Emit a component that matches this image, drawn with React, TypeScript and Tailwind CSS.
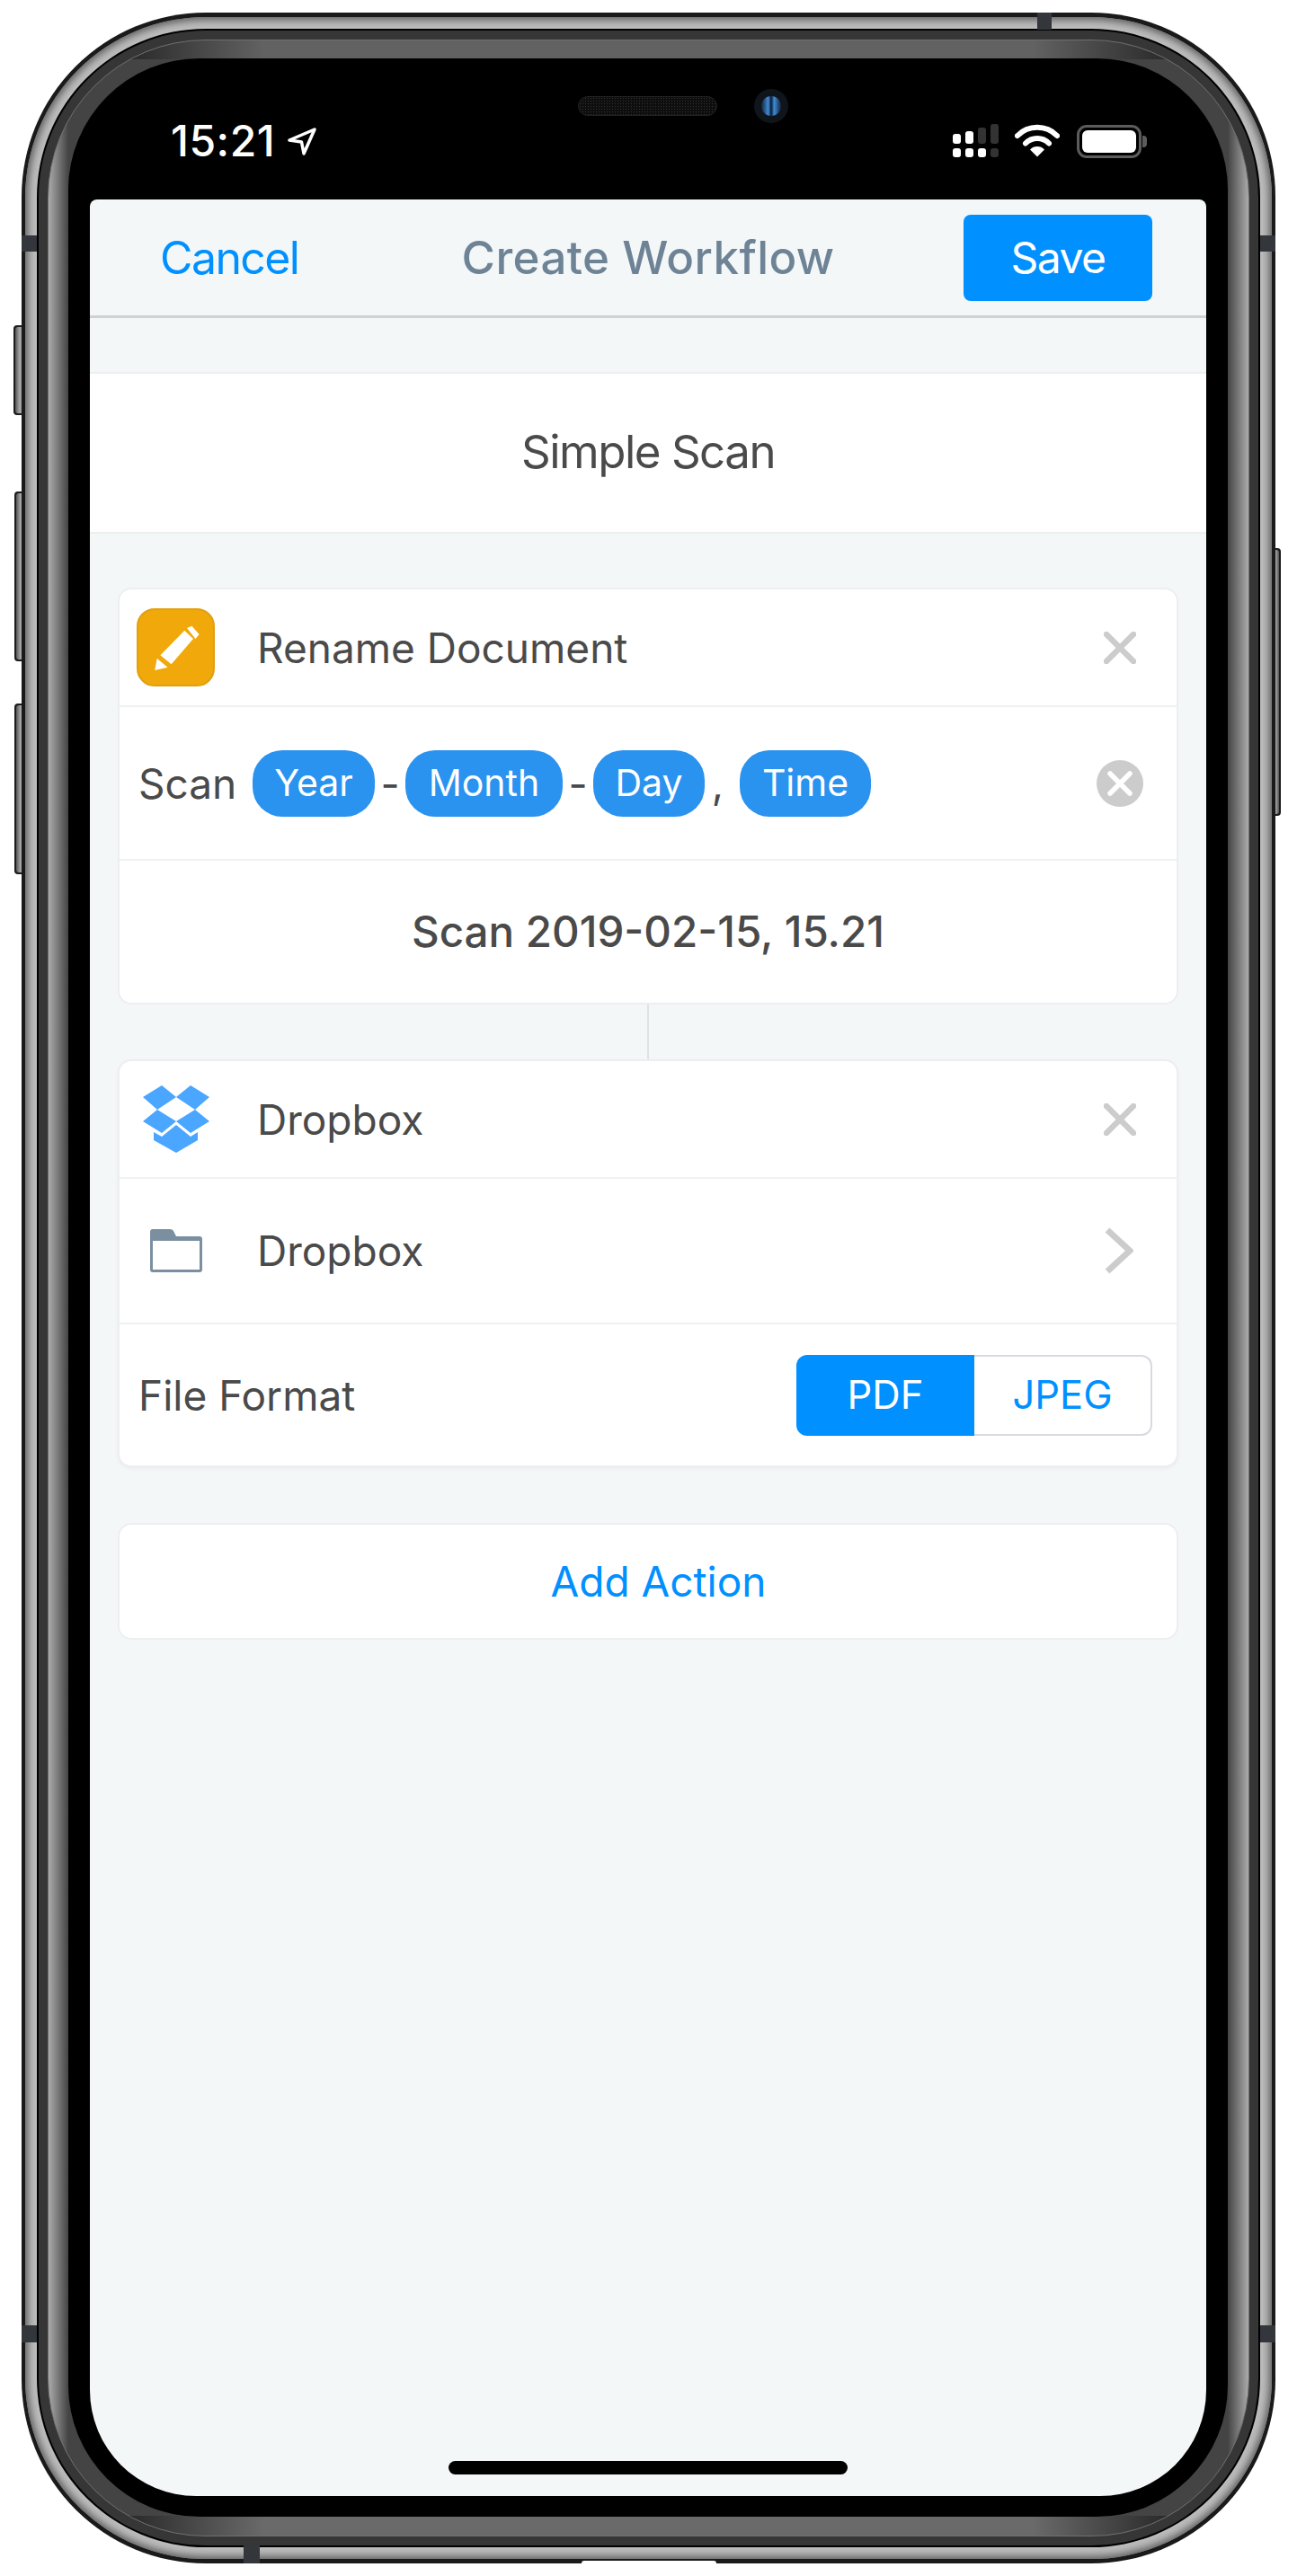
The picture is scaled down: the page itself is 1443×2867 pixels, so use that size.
import React from "react";

const font = "[font-family:Inter,'Liberation_Sans',sans-serif]";

function XIcon({ h = 36 }: { h?: number }) {
  return (
    <svg width="36" height={h} viewBox={`0 0 36 ${h}`} className="block" aria-hidden>
      <path d={`M3 3 L33 ${h - 3} M33 3 L3 ${h - 3}`} stroke="#cccccc" strokeWidth="6.5" strokeLinecap="round" fill="none" />
    </svg>
  );
}

function Pill({ w, children }: { w: string; children: React.ReactNode }) {
  return <div className={`${w} h-[74px] rounded-[33px] bg-[#2a92ef] text-white text-[41px] flex items-center justify-center`}>{children}</div>;
}

function Row({ h, children, last }: { h: string; children: React.ReactNode; last?: boolean }) {
  return <div className={`${h} flex items-center ${last ? "" : "border-b-2 border-[#f0f1f2]"}`}>{children}</div>;
}

export default function App() {
  return (
    <div className={`relative w-[1443px] h-[2867px] bg-white overflow-hidden ${font}`}>
      {/* side buttons */}
      <div className="absolute left-[15px] top-[362px] w-[12px] h-[100px] rounded-l-[4px] bg-[#1c1c1c] p-[2px] pr-0"><div className="w-full h-full rounded-l-[3px] bg-[linear-gradient(90deg,#555,#aaa_50%,#777)]" /></div>
      <div className="absolute left-[16px] top-[547px] w-[12px] h-[189px] rounded-l-[4px] bg-[#1c1c1c] p-[2px] pr-0"><div className="w-full h-full rounded-l-[3px] bg-[linear-gradient(90deg,#555,#aaa_50%,#777)]" /></div>
      <div className="absolute left-[16px] top-[783px] w-[12px] h-[190px] rounded-l-[4px] bg-[#1c1c1c] p-[2px] pr-0"><div className="w-full h-full rounded-l-[3px] bg-[linear-gradient(90deg,#555,#aaa_50%,#777)]" /></div>
      <div className="absolute left-[1415px] top-[610px] w-[10px] h-[298px] rounded-r-[4px] bg-[#1c1c1c] p-[2px] pl-0"><div className="w-full h-full rounded-r-[3px] bg-[linear-gradient(270deg,#555,#aaa_50%,#777)]" /></div>

      {/* device frame: nested bands */}
      <div className="pt-[14px] pl-[24px]">
        <div className="relative w-[1395px] h-[2839px] rounded-[205px] bg-[#1a1a1a] p-[5px] pl-[4px] pr-[4px]">
          <div className="w-full h-full rounded-[201px] bg-[#bcbcbc] shadow-[inset_0_0_9px_3px_#5c5c5c] p-[13px]">
            <div className="w-full h-full rounded-[188px] bg-black p-[2px]">
              <div className="w-full h-full rounded-[186px] bg-[#363636] pt-[10px] pb-[10px] px-[10px]">
                <div className="w-full h-full rounded-[176px] border border-[#707070] [background:linear-gradient(to_right,#2a2a2a_90px,#626262_240px,#626262_calc(100%-240px),#2a2a2a_calc(100%-90px))_top/100%_21px_no-repeat,linear-gradient(to_right,#2a2a2a_90px,#6a6a6a_240px,#6a6a6a_calc(100%-240px),#2a2a2a_calc(100%-90px))_bottom/100%_22px_no-repeat,linear-gradient(to_right,#ababab_0,#444_22px,#444_calc(100%-23px),#ababab_100%)] pt-[20px] pb-[21px] pl-[22px] pr-[23px]">
                  <div className="relative w-full h-full rounded-[146px] bg-black pt-[157px] pb-[23px] px-[24px]">
                    {/* status bar */}
                    <div className="absolute left-[567px] top-[42px] w-[155px] h-[22px] rounded-[11px] bg-[#0e0e0e] bg-[radial-gradient(#333_1px,transparent_1px)] bg-[size:3px_3px] border border-[#222]" />
                    <div className="absolute left-[763px] top-[34px] w-[38px] h-[38px] rounded-full bg-[#10151c] flex items-center justify-center">
                      <div className="w-[22px] h-[22px] rounded-full bg-[linear-gradient(90deg,#12233a,#3f8bd6_35%,#0c1a2c_50%,#3f8bd6_65%,#12233a)]" />
                    </div>
                    <div className="absolute left-[114px] top-[67px] text-white text-[48px] leading-[50px] font-medium tracking-[0.5px] whitespace-nowrap">15:21</div>
                    <svg className="absolute left-[244px] top-[77px]" width="32" height="31" viewBox="0 0 32 31" aria-hidden>
                      <path d="M2 14 L30 2 L18 29 L15.5 16 Z" fill="none" stroke="#fff" strokeWidth="3.5" strokeLinejoin="round" />
                    </svg>
                    <svg className="absolute left-[984px] top-[73px]" width="52" height="38" viewBox="0 0 52 38" aria-hidden>
                      <rect x="0" y="11" width="9" height="11" rx="3" fill="#fff" />
                      <rect x="14" y="8" width="9" height="14" rx="3" fill="#fff" />
                      <rect x="28" y="4" width="9" height="18" rx="3" fill="#333" />
                      <rect x="42" y="0" width="9" height="22" rx="3" fill="#333" />
                      <rect x="0" y="27" width="9" height="10" rx="3" fill="#fff" />
                      <rect x="14" y="27" width="9" height="10" rx="3" fill="#fff" />
                      <rect x="28" y="27" width="9" height="10" rx="3" fill="#fff" />
                      <rect x="42" y="27" width="9" height="10" rx="3" fill="#333" />
                    </svg>
                    <svg className="absolute left-[1053px] top-[73px]" width="50" height="37" viewBox="0 0 50 37" aria-hidden>
                      <path d="M3 13 A31 31 0 0 1 47 13" stroke="#fff" strokeWidth="6" fill="none" strokeLinecap="round" />
                      <path d="M12 21.5 A18 18 0 0 1 38 21.5" stroke="#fff" strokeWidth="6" fill="none" strokeLinecap="round" />
                      <path d="M25 36.5 L17 28.5 A11 11 0 0 1 33 28.5 Z" fill="#fff" />
                    </svg>
                    <div className="absolute left-[1122px] top-[74px] w-[72px] h-[37px] rounded-[11px] border-[3px] border-[#5c5c5c] p-[3px]">
                      <div className="w-full h-full rounded-[6px] bg-white" />
                    </div>
                    <div className="absolute left-[1195px] top-[86px] w-[5px] h-[13px] rounded-r-[4px] bg-[#5c5c5c]" />

                    {/* screen */}
                    <div className="relative w-full h-full bg-[#f4f7f8] rounded-t-[8px] rounded-b-[118px] overflow-hidden text-[#4a4a4a] text-[46px] leading-none">
                      <div className="h-[132px] border-b-[3px] border-[#cfd1d2] flex items-center pl-[78px] pr-[60px]">
                        <div className="flex-1 basis-0"><span className="text-[#0090ff] text-[50px] tracking-[-1.6px]">Cancel</span></div>
                        <span className="mr-[18px] text-[#6e8496] text-[51px] font-medium tracking-[0.4px]">Create Workflow</span>
                        <div className="flex-1 basis-0 flex justify-end">
                          <div className="w-[210px] h-[96px] rounded-[8px] bg-[#0090ff] text-white text-[48px] tracking-[-1.5px] flex items-center justify-center">Save</div>
                        </div>
                      </div>
                      <div className="mt-[60px] h-[180px] pb-[3px] bg-white border-y-2 border-[#eceff0] flex items-center justify-center text-[51px] tracking-[-1.5px]">Simple Scan</div>

                      <div className="px-[31px] pt-[60px]">
                        <div className="h-[464px] bg-white rounded-[15px] border-2 border-[#eceef0]">
                          <Row h="h-[131px]">
                            <div className="ml-[19px] w-[87px] h-[87px] rounded-[20px] bg-[#f1a80a] border-2 border-[#e0a010]">
                              <svg width="83" height="83" viewBox="154 678 83 83" aria-hidden>
                                <path d="M174.7 731.7 L186.5 741.7 L172.2 745 Z M178.4 728.3 L190.6 738.3 L215 710 L205.3 700.7 Z M208 698 L213.5 695.7 L221.6 705 L217.5 710 Z" fill="#fff" />
                              </svg>
                            </div>
                            <span className="ml-[47px]">Rename Document</span>
                            <div className="ml-auto mr-[45px]"><XIcon /></div>
                          </Row>
                          <Row h="h-[171px]">
                            <span className="ml-[21px] w-[127px]">Scan</span>
                            <Pill w="w-[136px]">Year</Pill>
                            <span className="w-[34px] text-center">-</span>
                            <Pill w="w-[175px]">Month</Pill>
                            <span className="w-[34px] text-center">-</span>
                            <Pill w="w-[124px]">Day</Pill>
                            <span className="w-[39px] pr-[10px] text-center">,</span>
                            <Pill w="w-[146px]">Time</Pill>
                            <div className="ml-auto mr-[37px] w-[52px] h-[52px] rounded-full bg-[#cccccc] flex items-center justify-center">
                              <svg width="28" height="28" viewBox="0 0 28 28" aria-hidden>
                                <path d="M3 3 L25 25 M25 3 L3 25" stroke="#fff" strokeWidth="5.5" strokeLinecap="round" />
                              </svg>
                            </div>
                          </Row>
                          <Row h="h-[157px]" last>
                            <span className="w-full text-center font-medium text-[47.5px]">Scan 2019-02-15, 15.21</span>
                          </Row>
                        </div>

                        <div className="ml-[589px] w-[2px] h-[61px] bg-[#e0e3e5]" />

                        <div className="h-[454px] bg-white rounded-[15px] border-2 border-[#eceef0] shadow-[0_2px_4px_rgba(0,0,0,0.04)]">
                          <Row h="h-[131px]">
                            <svg className="ml-[26px]" width="74" height="75" viewBox="0 0 74 75" aria-hidden>
                              <path fill="#4aa6ff" d="M21 0 L37 13 L16 27 L0 13 Z M53 0 L74 13 L58 27 L37 13 Z M16 27 L37 40 L21 53 L0 40 Z M58 27 L74 40 L53 53 L37 40 Z M37 44 L53 57 L61 52 L61 61 L37 75 L12 61 L12 52 L21 57 Z" />
                            </svg>
                            <span className="ml-[53px]">Dropbox</span>
                            <div className="ml-auto mr-[45px]"><XIcon /></div>
                          </Row>
                          <Row h="h-[162px]">
                            <svg className="ml-[34px]" width="58" height="48" viewBox="0 0 58 48" aria-hidden>
                              <path fill="#7b8fa0" d="M3 0 H22 Q25 0 26 2 L29 8 H55 Q58 8 58 11 V45 Q58 48 55 48 H3 Q0 48 0 45 V3 Q0 0 3 0 Z" />
                              <rect x="3" y="13" width="52" height="32" fill="#fff" />
                            </svg>
                            <span className="ml-[61px]">Dropbox</span>
                            <svg className="ml-auto mr-[48px]" width="32" height="52" viewBox="0 0 32 52" aria-hidden>
                              <path d="M3 3 L28 26 L3 49" stroke="#cccccc" strokeWidth="7" fill="none" />
                            </svg>
                          </Row>
                          <Row h="h-[157px]" last>
                            <span className="ml-[21px]">File Format</span>
                            <div className="ml-auto mr-[27px] flex h-[90px] w-[396px] text-[#0090ff] text-[43.5px]">
                              <div className="w-[198px] rounded-l-[12px] bg-[#0090ff] text-white flex items-center justify-center">PDF</div>
                              <div className="flex-1 rounded-r-[12px] border-2 border-l-0 border-[#d9d9e2] flex items-center justify-center">JPEG</div>
                            </div>
                          </Row>
                        </div>

                        <div className="mt-[62px] h-[130px] bg-white rounded-[15px] border-2 border-[#eceef0] flex items-center justify-center pl-[23px] text-[#0090ff]">Add Action</div>
                      </div>

                      <div className="absolute left-[399px] top-[2517px] w-[444px] h-[15px] rounded-[8px] bg-black" />
                    </div>
                  </div>
                </div>
              </div>
            </div>
          </div>
          {/* antenna bands */}
          <div className="absolute left-0 top-[248px] w-[17px] h-[18px] bg-[#33363a]" />
          <div className="absolute right-0 top-[248px] w-[17px] h-[18px] bg-[#33363a]" />
          <div className="absolute left-0 top-[2574px] w-[17px] h-[19px] bg-[#33363a]" />
          <div className="absolute right-0 top-[2574px] w-[17px] h-[19px] bg-[#33363a]" />
          <div className="absolute left-[1130px] top-0 w-[16px] h-[19px] bg-[#33363a]" />
          <div className="absolute left-[247px] bottom-0 w-[18px] h-[20px] bg-[#33363a]" />
          {/* bottom notch */}
          <div className="absolute left-[623px] bottom-0 w-[150px] h-[3px] rounded-t-[6px] bg-white" />
        </div>
      </div>
    </div>
  );
}
